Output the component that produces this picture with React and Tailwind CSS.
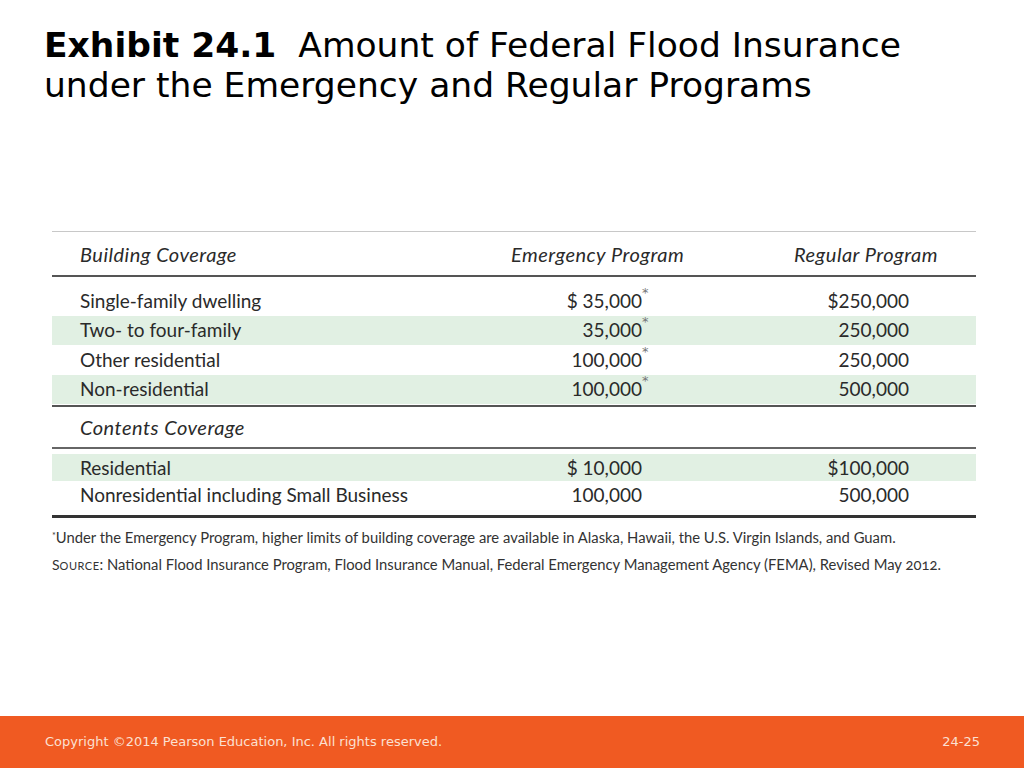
const rows = [
  { label: 'Single-family dwelling', em: '$ 35,000', star: true, reg: '$250,000', green: false },
  { label: 'Two- to four-family', em: '35,000', star: true, reg: '250,000', green: true },
  { label: 'Other residential', em: '100,000', star: true, reg: '250,000', green: false },
  { label: 'Non-residential', em: '100,000', star: true, reg: '500,000', green: true },
];

const contents = [
  { label: 'Residential', em: '$ 10,000', reg: '$100,000', green: true },
  { label: 'Nonresidential including Small Business', em: '100,000', reg: '500,000', green: false },
];

const Row = ({ row, h }) => (
  <div className={`grid grid-cols-[428px_210px_286px] items-center ${h} ${row.green ? 'bg-[#e1f0e3]' : ''}`}>
    <div className="pl-[28px]">{row.label}</div>
    <div className="text-right pr-[48px]">
      <span className="relative">
        {row.em}
        {row.star && <span className="absolute left-full -top-[6px] text-[13px] text-[#777] font-['DejaVu_Sans',sans-serif]">*</span>}
      </span>
    </div>
    <div className="text-right pr-[67px]">{row.reg}</div>
  </div>
);

const App = () => {
  return (
    <div className="w-[1024px] h-[768px] bg-white flex flex-col font-['Lato','Open_Sans',sans-serif]">
      <h1 className="px-[44px] pt-[25px] text-[34.5px] leading-[40px] text-black font-['DejaVu_Sans',sans-serif]">
        <span className="font-bold">Exhibit 24.1</span>&nbsp; Amount of Federal Flood Insurance
        <br />
        under the Emergency and Regular Programs
      </h1>

      <div className="mt-[126px] ml-[52px] w-[924px] text-[19px] text-[#2a2a2a]">
        <div className="border-t border-[#c8c8c8] grid grid-cols-[428px_210px_286px] h-[44px] items-center italic text-[20px] tracking-[0.5px]">
          <div className="pl-[28px]">Building Coverage</div>
          <div className="pl-[31px]">Emergency Program</div>
          <div className="pl-[104px]">Regular Program</div>
        </div>
        <div className="border-t-2 border-[#555] pt-[9px] pb-[1px]">
          {rows.map((r) => (
            <Row key={r.label} row={r} h="h-[29.5px]" />
          ))}
        </div>
        <div className="border-t-2 border-[#555] h-[42px] flex items-center pl-[28px] italic text-[20px] tracking-[0.5px]">
          Contents Coverage
        </div>
        <div className="border-t-2 border-[#666] pt-[5px] pb-[7px]">
          {contents.map((r) => (
            <Row key={r.label} row={r} h="h-[27px]" />
          ))}
        </div>
        <div className="border-t-[3px] border-[#333]" />
      </div>

      <div className="ml-[52px] mt-[6px] text-[14.8px] leading-[27px] text-[#333]">
        <div>
          <sup className="text-[9px]">*</sup>Under the Emergency Program, higher limits of building coverage are available in Alaska, Hawaii, the U.S. Virgin Islands, and Guam.
        </div>
        <div>
          <span className="text-[14px]">S</span>
          <span className="uppercase text-[11px] tracking-[0.5px]">ource</span>: National Flood Insurance Program, Flood Insurance Manual, Federal Emergency Management Agency (FEMA), Revised May <span className="oldstyle-nums">2012</span>.
        </div>
      </div>

      <div className="mt-auto h-[52px] bg-[#f05a22] flex items-center justify-between pl-[45px] pr-[44px] text-[13px] text-[#fbe0d2] font-['DejaVu_Sans',sans-serif]">
        <span>Copyright ©2014 Pearson Education, Inc. All rights reserved.</span>
        <span>24-25</span>
      </div>
    </div>
  );
};

export default App;
